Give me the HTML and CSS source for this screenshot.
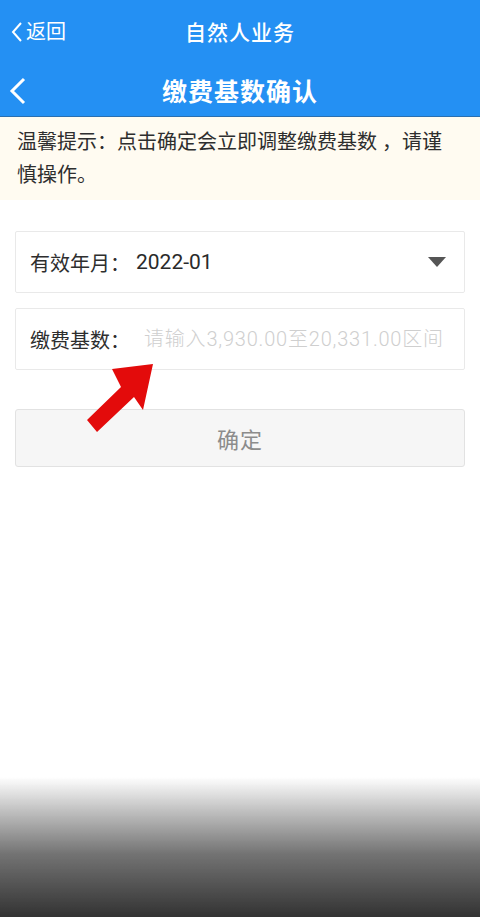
FILE: index.html
```html
<!DOCTYPE html>
<html lang="zh-CN">
<head>
<meta charset="UTF-8">
<meta name="viewport" content="width=device-width, initial-scale=1.0">
<title>缴费基数确认</title>
<link rel="stylesheet" href="styles.css">
</head>
<body>
<div class="header">
    <div class="top-bar">
        <span class="back-link">
            <svg width="14" height="22" viewBox="0 0 14 22"><path d="M11 2 L3 11 L11 20" fill="none" stroke="#fff" stroke-width="2"/></svg>
            返回
        </span>
        <span class="top-title">自然人业务</span>
    </div>
    <div class="title-bar">
        <svg class="title-back" width="20" height="30" viewBox="0 0 20 30"><path d="M16 3 L4 15 L16 27" fill="none" stroke="#fff" stroke-width="3"/></svg>
        <span class="page-title">缴费基数确认</span>
    </div>
</div>

<div class="notice">温馨提示：点击确定会立即调整缴费基数 ，请谨慎操作。</div>

<div class="form">
    <div class="field">
        <span class="label">有效年月：</span>
        <span class="value">2022-01</span>
        <span class="caret"></span>
    </div>
    <div class="field">
        <span class="label">缴费基数：</span>
        <input class="amount" type="text" placeholder="请输入3,930.00至20,331.00区间">
    </div>
    <button class="confirm" type="button">确定</button>

    <svg class="pointer" width="80" height="80" viewBox="80 360 80 80">
        <polygon points="87,420 121,387 112,369 153,364 143,410 134,397 97,432" fill="#e30b0b"/>
    </svg>
</div>

<div class="fade"></div>
</body>
</html>
```

FILE: styles.css
```css
body {
    margin: 0;
    padding: 0;
    font-family: Roboto, "Noto Sans CJK SC", sans-serif;
    background-color: #fff;
    color: #333;
}

.header {
    background-color: #2490f3;
    color: #fff;
    border-bottom: 1px solid #2a6fb0;
}

.top-bar {
    height: 62px;
    display: flex;
    align-items: center;
    justify-content: center;
    position: relative;
}

.back-link {
    position: absolute;
    left: 10px;
    top: 20px;
    display: flex;
    align-items: center;
    font-size: 20px;
    line-height: 24px;
}

.back-link svg {
    margin-right: 2px;
}

.top-title {
    font-size: 21px;
    font-weight: 500;
    letter-spacing: 1px;
}

.title-bar {
    height: 54px;
    display: flex;
    align-items: center;
    justify-content: center;
    position: relative;
}

.title-back {
    position: absolute;
    left: 8px;
    top: 14px;
}

.page-title {
    font-size: 25px;
    font-weight: bold;
    letter-spacing: 1px;
    margin-top: 2px;
}

.notice {
    background-color: #fffbf1;
    padding: 9px 30px 8px 17px;
    font-size: 20px;
    line-height: 33px;
    color: #2e2e2e;
}

.form {
    padding: 31px 15px 0 15px;
    position: relative;
}

.field {
    height: 60px;
    border: 1px solid #e9e9e9;
    border-radius: 2px;
    display: flex;
    align-items: center;
    padding: 0 18px 0 14px;
    margin-bottom: 15px;
    font-size: 20px;
    overflow: hidden;
}

.label {
    color: #2e2e2e;
    white-space: nowrap;
}

.value {
    flex: 1;
    margin-left: 6px;
    font-size: 21px;
    color: #2a2a2a;
}

.caret {
    width: 0;
    height: 0;
    border-left: 9px solid transparent;
    border-right: 9px solid transparent;
    border-top: 10px solid #555;
}

.amount {
    flex: 1;
    min-width: 0;
    border: none;
    outline: none;
    padding: 0 0 0 14px;
    font-family: inherit;
    font-size: 20px;
    font-weight: 300;
    letter-spacing: 0.8px;
    color: #333;
}

.amount::placeholder {
    color: #cfcfcf;
}

.confirm {
    width: 100%;
    height: 58px;
    margin-top: 24px;
    background-color: #f6f6f6;
    border: 1px solid #e2e2e2;
    border-radius: 3px;
    font-family: inherit;
    font-size: 22px;
    color: #8c8c8c;
    letter-spacing: 1px;
}

.pointer {
    position: absolute;
    left: 80px;
    top: 160px;
}

.fade {
    position: fixed;
    left: 0;
    right: 0;
    bottom: 0;
    height: 140px;
    background: linear-gradient(to bottom, rgba(40, 40, 40, 0) 0%, rgba(40, 40, 40, 0.3) 25%, rgba(40, 40, 40, 0.65) 55%, rgba(40, 40, 40, 0.95) 100%);
    pointer-events: none;
}
```
